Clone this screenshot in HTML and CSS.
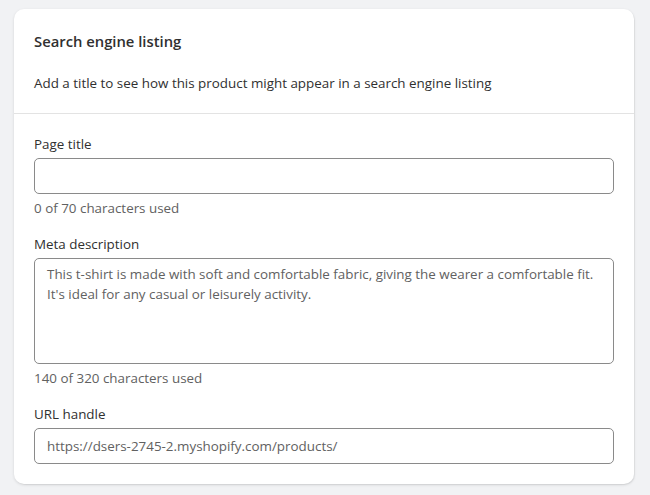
FILE: index.html
```html
<!DOCTYPE html>
<html lang="en">
<head>
<meta charset="utf-8">
<title>Search engine listing</title>
<link rel="stylesheet" href="styles.css">
</head>
<body>
<section class="card">
  <header class="card-header">
    <h2 class="card-title">Search engine listing</h2>
    <p class="card-desc">Add a title to see how this product might appear in a search engine listing</p>
  </header>
  <div class="card-body">
    <div class="field">
      <label class="field-label" for="page-title">Page title</label>
      <input class="text-input" id="page-title" type="text">
      <div class="help">0 of 70 characters used</div>
    </div>
    <div class="field">
      <label class="field-label" for="meta">Meta description</label>
      <textarea class="text-area" id="meta">This t-shirt is made with soft and comfortable fabric, giving the wearer a comfortable fit.
It's ideal for any casual or leisurely activity.</textarea>
      <div class="help">140 of 320 characters used</div>
    </div>
    <div class="field">
      <label class="field-label" for="url">URL handle</label>
      <input class="text-input" id="url" type="text" placeholder="https://dsers-2745-2.myshopify.com/products/">
    </div>
  </div>
</section>
</body>
</html>
```
FILE: styles.css
```css
* { box-sizing: border-box; }
html, body { margin: 0; padding: 0; }
body {
  background: #f1f2f4;
  font-family: "Segoe UI", "Open Sans", "Noto Sans", sans-serif;
  font-size: 13.4px;
  line-height: 20px;
  color: #303030;
  padding: 9px 16px 11px 14px;
}
.card {
  background: #fff;
  border-radius: 10px;
  box-shadow: 0 1px 3px rgba(0,0,0,0.12), 1px 1px 0 rgba(0,0,0,0.04);
}
.card-header {
  padding: 22px 20px 20px;
  border-bottom: 1px solid #e3e3e3;
  display: flex;
  flex-direction: column;
  gap: 22px;
}
.card-title {
  margin: 0;
  font-size: 14.8px;
  font-weight: 600;
  line-height: 20px;
}
.card-desc { margin: 0; }
.card-body {
  padding: 20px 20px 20px;
  display: flex;
  flex-direction: column;
  gap: 16px;
}
.field {
  display: flex;
  flex-direction: column;
  gap: 4px;
}
.field-label { display: block; }
.text-input, .text-area {
  width: 100%;
  font: inherit;
  color: #616161;
  border: 1px solid #8a8a8a;
  border-radius: 5px;
  background: #fff;
  padding: 0 12px;
  outline: none;
}
.text-input { height: 36px; }
.text-input::placeholder { color: #616161; opacity: 1; }
.text-area {
  height: 106px;
  padding: 5px 12px;
  resize: none;
  white-space: pre;
  overflow: hidden;
}
.help { color: #616161; }
```
